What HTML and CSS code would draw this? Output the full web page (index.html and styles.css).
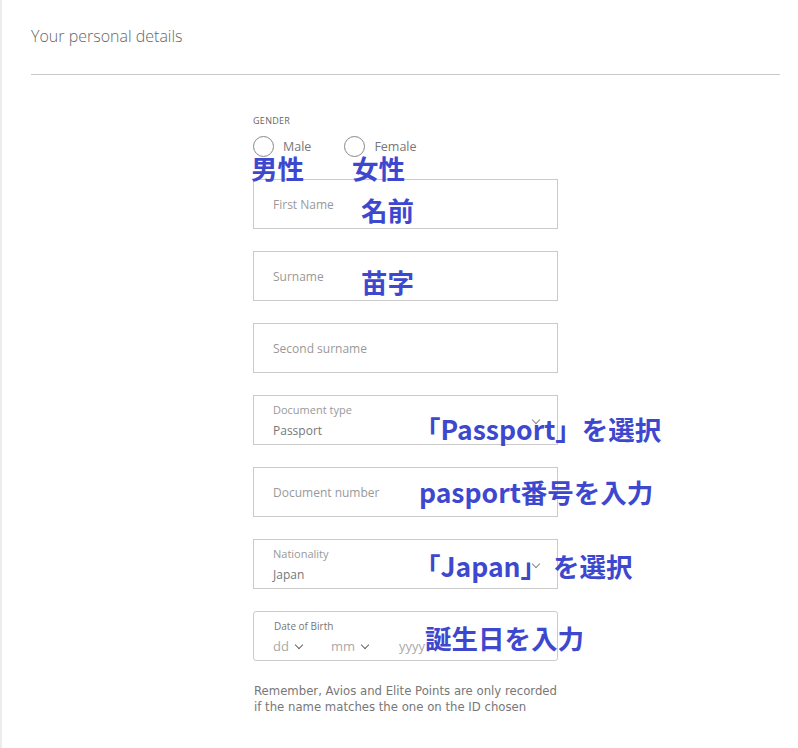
FILE: index.html
```html
<!DOCTYPE html>
<html>
<head>
  <title>Your personal details</title>
  <link rel="stylesheet" href="styles.css">
</head>
<body>
  <div class="page">
    <h2 class="title">Your personal details</h2>
    <div class="divider"></div>

    <div class="form">
      <div class="gender">
        <div class="gender-label">GENDER</div>
        <div class="radios">
          <label class="radio"><span class="circle"></span>Male</label>
          <label class="radio"><span class="circle"></span>Female</label>
        </div>
      </div>

      <div class="field"><span class="placeholder">First Name</span></div>
      <div class="field"><span class="placeholder">Surname</span></div>
      <div class="field"><span class="placeholder">Second surname</span></div>

      <div class="field select">
        <span class="small-label">Document type</span>
        <span class="value">Passport</span>
        <span class="chevron"></span>
      </div>

      <div class="field"><span class="placeholder">Document number</span></div>

      <div class="field select">
        <span class="small-label">Nationality</span>
        <span class="value">Japan</span>
        <span class="chevron"></span>
      </div>

      <div class="field date">
        <span class="date-label">Date of Birth</span>
        <div class="date-parts">
          <span class="part part-dd">dd <span class="mini-chevron"></span></span>
          <span class="part part-mm">mm <span class="mini-chevron"></span></span>
          <span class="part">yyyy</span>
        </div>
      </div>

      <p class="note">Remember, Avios and Elite Points are only recorded<br>if the name matches the one on the ID chosen</p>
    </div>

    <!-- annotations drawn over the screenshot -->
    <span class="note-jp" style="left:249px; top:155px;">男性</span>
    <span class="note-jp" style="left:350px; top:155px;">女性</span>
    <span class="note-jp" style="left:359px; top:197px;">名前</span>
    <span class="note-jp" style="left:359px; top:269px;">苗字</span>
    <span class="note-jp" style="left:412px; top:416px;">「Passport」を選択</span>
    <span class="note-jp" style="left:417px; top:479px;">pasport番号を入力</span>
    <span class="note-jp" style="left:412px; top:553px;">「Japan」 を選択</span>
    <span class="note-jp" style="left:423px; top:625px;">誕生日を入力</span>
  </div>
</body>
</html>
```

FILE: styles.css
```css
body {
  margin: 0;
  padding: 0;
  background-color: white;
  font-family: 'Open Sans', 'Noto Sans', sans-serif;
}
.page {
  position: relative;
  height: 748px;
  border-left: 2px solid #ececec;
  box-sizing: border-box;
  overflow: hidden;
}
.title {
  margin: 0;
  padding: 25px 0 0 29px;
  font-size: 16px;
  font-weight: 300;
  color: #666;
  line-height: 22px;
}
.divider {
  margin: 27px 18px 0 29px;
  border-top: 1px solid #c8c8c8;
}
.form {
  margin-left: 251px;
  width: 305px;
  padding-top: 40px;
}
.gender-label {
  font-size: 9px;
  color: #666;
  letter-spacing: 0.3px;
  line-height: 12px;
}
.radios {
  display: flex;
  gap: 33px;
  margin-top: 9px;
  height: 21px;
}
.radio {
  display: flex;
  align-items: center;
  font-size: 12.5px;
  line-height: 16px;
  color: #777;
}
.circle {
  width: 19px;
  height: 19px;
  border: 1px solid #888;
  border-radius: 50%;
  margin-right: 9px;
}
.field {
  position: relative;
  height: 50px;
  border: 1px solid #cacaca;
  box-sizing: border-box;
  margin-top: 22px;
  padding-left: 19px;
  display: flex;
  flex-direction: column;
  justify-content: center;
}
.placeholder {
  font-size: 12px;
  color: #999;
}
.select {
  justify-content: flex-start;
  padding-top: 7px;
}
.small-label {
  font-size: 11px;
  color: #999;
  line-height: 14px;
}
.value {
  font-size: 12px;
  color: #777;
  margin-top: 6px;
  line-height: 16px;
}
.chevron {
  position: absolute;
  right: 18px;
  top: 21px;
  width: 5px;
  height: 5px;
  border-right: 1px solid #888;
  border-bottom: 1px solid #888;
  transform: rotate(45deg);
}
.date {
  border-radius: 3px;
  justify-content: flex-start;
  padding-top: 8px;
}
.date-label {
  font-size: 10px;
  color: #777;
  line-height: 13px;
  margin-left: 1px;
}
.date-parts {
  display: flex;
  margin-top: 5px;
  font-size: 13px;
  color: #aaa;
  line-height: 16px;
}
.part {
  display: flex;
  align-items: center;
}
.part-dd {
  width: 58px;
}
.part-mm {
  width: 68px;
}
.mini-chevron {
  display: inline-block;
  width: 5px;
  height: 5px;
  border-right: 1px solid #666;
  border-bottom: 1px solid #666;
  transform: rotate(45deg);
  margin: -3px 0 0 7px;
}
.note {
  margin: 22px 0 0 1px;
  color: #777;
  line-height: 16px;
  font-family: 'DejaVu Sans', sans-serif;
  font-size: 11.7px;
  width: 340px;
}
.note-jp {
  position: absolute;
  font-family: 'Noto Sans CJK JP', sans-serif;
  font-weight: bold;
  font-size: 26.5px;
  line-height: 26px;
  color: #3e48cf;
  white-space: nowrap;
}
```
